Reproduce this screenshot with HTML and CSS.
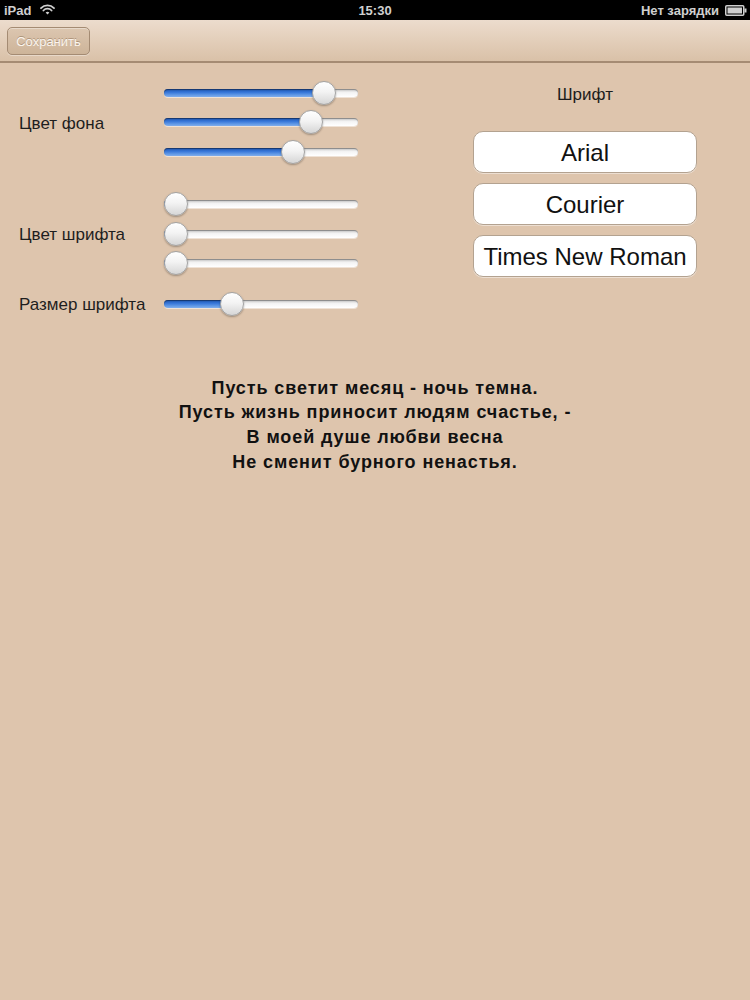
FILE: index.html
```html
<!DOCTYPE html>
<html lang="ru">
<head>
<meta charset="utf-8">
<title>Настройки</title>
<link rel="stylesheet" href="styles.css">
</head>
<body>
<div class="status">
  <div class="status-left">
    <span>iPad</span>
    <svg class="wifi" width="15" height="11" viewBox="0 0 15 11">
      <path d="M1 4.2 A9 9 0 0 1 14 4.2" fill="none" stroke="#cfcfcf" stroke-width="1.8" stroke-linecap="round"/>
      <path d="M3.4 6.5 A5.6 5.6 0 0 1 11.6 6.5" fill="none" stroke="#cfcfcf" stroke-width="1.8" stroke-linecap="round"/>
      <path d="M7.5 10.5 L5.6 8.6 A2.7 2.7 0 0 1 9.4 8.6 Z" fill="#cfcfcf"/>
    </svg>
  </div>
  <div class="status-time">15:30</div>
  <div class="status-right">
    <span>Нет зарядки</span>
    <svg class="battery" width="22" height="11" viewBox="0 0 22 11">
      <rect x="0.75" y="0.75" width="18" height="9.5" rx="1" fill="none" stroke="#cfcfcf" stroke-width="1.5"/>
      <rect x="2.5" y="2.5" width="14.5" height="6" fill="#cfcfcf"/>
      <rect x="19.5" y="3.5" width="2" height="4" fill="#cfcfcf"/>
    </svg>
  </div>
</div>

<div class="toolbar">
  <button class="save">Сохранить</button>
</div>

<div class="main">
  <div class="controls">
    <div class="group">
      <div class="label">Цвет фона</div>
      <div class="sliders">
        <div class="slider" style="--v:0.866"><div class="fill"></div><div class="thumb"></div></div>
        <div class="slider" style="--v:0.79"><div class="fill"></div><div class="thumb"></div></div>
        <div class="slider" style="--v:0.686"><div class="fill"></div><div class="thumb"></div></div>
      </div>
    </div>
    <div class="group gap-big">
      <div class="label">Цвет шрифта</div>
      <div class="sliders">
        <div class="slider" style="--v:0"><div class="fill"></div><div class="thumb"></div></div>
        <div class="slider" style="--v:0"><div class="fill"></div><div class="thumb"></div></div>
        <div class="slider" style="--v:0"><div class="fill"></div><div class="thumb"></div></div>
      </div>
    </div>
    <div class="group gap-small">
      <div class="label">Размер шрифта</div>
      <div class="sliders">
        <div class="slider" style="--v:0.33"><div class="fill"></div><div class="thumb"></div></div>
      </div>
    </div>
  </div>

  <div class="fonts">
    <div class="fonts-title">Шрифт</div>
    <button class="font-btn">Arial</button>
    <button class="font-btn">Courier</button>
    <button class="font-btn">Times New Roman</button>
  </div>
</div>

<div class="poem">
  <p>Пусть светит месяц - ночь темна.</p>
  <p>Пусть жизнь приносит людям счастье, -</p>
  <p>В моей душе любви весна</p>
  <p>Не сменит бурного ненастья.</p>
</div>
</body>
</html>
```

FILE: styles.css
```css
html, body {
  margin: 0;
  padding: 0;
}
body {
  width: 750px;
  height: 1000px;
  background: #dec5ad;
  font-family: "Liberation Sans", Arial, sans-serif;
  color: #1c1c1c;
  overflow: hidden;
}

/* status bar */
.status {
  height: 20px;
  background: #000;
  color: #cfcfcf;
  font-size: 13px;
  font-weight: bold;
  display: flex;
  align-items: center;
  justify-content: space-between;
  padding: 0 3px 0 4px;
  position: relative;
}
.status-left, .status-right {
  display: flex;
  align-items: center;
  gap: 6px;
}
.status-left { gap: 9px; }
.status-time {
  position: absolute;
  left: 0;
  right: 0;
  text-align: center;
  pointer-events: none;
}
.wifi { margin-top: -1px; }

/* toolbar */
.toolbar {
  height: 41px;
  background: linear-gradient(#ecdccd, #e2cdb8 55%, #d9c1a8);
  border-bottom: 2px solid #a58b73;
  display: flex;
  align-items: center;
  padding-left: 7px;
}
.save {
  width: 83px;
  height: 28px;
  margin-top: 1px;
  border: 1px solid #a48b73;
  border-radius: 5px;
  background: linear-gradient(#dcc6b0, #cdb499);
  box-shadow: inset 0 1px 0 rgba(255,255,255,0.35), 0 1px 0 rgba(255,255,255,0.35);
  color: #fbf5ee;
  font-family: "Liberation Sans", Arial, sans-serif;
  font-size: 13px;
  text-shadow: 0 -1px 0 rgba(110,80,50,0.4);
  padding: 0;
}

/* main area */
.main {
  display: flex;
  padding-top: 15px;
}
.controls {
  width: 358px;
  display: flex;
  flex-direction: column;
}
.group {
  display: flex;
  align-items: center;
}
.gap-big { margin-top: 23px; }
.gap-small { margin-top: 11px; }
.label {
  width: 145px;
  padding-left: 19px;
  padding-top: 3px;
  font-size: 17px;
  color: #1e1e1e;
}
.sliders {
  width: 194px;
  display: flex;
  flex-direction: column;
}
.slider {
  position: relative;
  height: 29.5px;
}
.slider::before {
  content: "";
  position: absolute;
  left: 0;
  right: 0;
  top: 50%;
  height: 8px;
  margin-top: -4px;
  border-radius: 4px;
  background: linear-gradient(#c9c9c9, #f4f4f4 45%, #ffffff);
  box-shadow: inset 0 1px 1px rgba(0,0,0,0.35), 0 1px 0 rgba(255,255,255,0.5);
}
.fill {
  position: absolute;
  left: 0;
  top: 50%;
  height: 8px;
  margin-top: -4px;
  width: calc(var(--v) * (100% - 22px) + 11px);
  border-radius: 4px 0 0 4px;
  background: linear-gradient(#1f55ae, #3575d8 40%, #6199e6 75%, #80adec);
  box-shadow: inset 0 1px 1px rgba(0,0,0,0.4);
}
.thumb {
  position: absolute;
  top: 50%;
  margin-top: -12px;
  left: calc(var(--v) * (100% - 22px) - 0.5px);
  width: 22px;
  height: 22px;
  border-radius: 50%;
  border: 1px solid #a3a3a3;
  background: linear-gradient(#ffffff, #f3f3f3 45%, #d6d6d6);
  box-shadow: 0 1px 2px rgba(0,0,0,0.3);
}

/* fonts column */
.fonts {
  margin-left: 115px;
  width: 224px;
  display: flex;
  flex-direction: column;
  align-items: stretch;
}
.fonts-title {
  text-align: center;
  font-size: 17px;
  height: 20px;
  line-height: 20px;
  margin-top: 7px;
  margin-bottom: 26px;
}
.font-btn {
  height: 42px;
  margin-bottom: 10px;
  border: 1px solid #b3a290;
  border-radius: 10px;
  background: #ffffff;
  box-shadow: 0 1px 0 rgba(255,255,255,0.45);
  font-family: "Liberation Sans", Arial, sans-serif;
  font-size: 24px;
  color: #111;
  padding: 2px 0 0;
}

/* poem */
.poem {
  margin-top: 57px;
  text-align: center;
  font-weight: bold;
  font-size: 18px;
  letter-spacing: 0.9px;
  line-height: 24.7px;
  color: #111;
}
.poem p {
  margin: 0;
}
```
